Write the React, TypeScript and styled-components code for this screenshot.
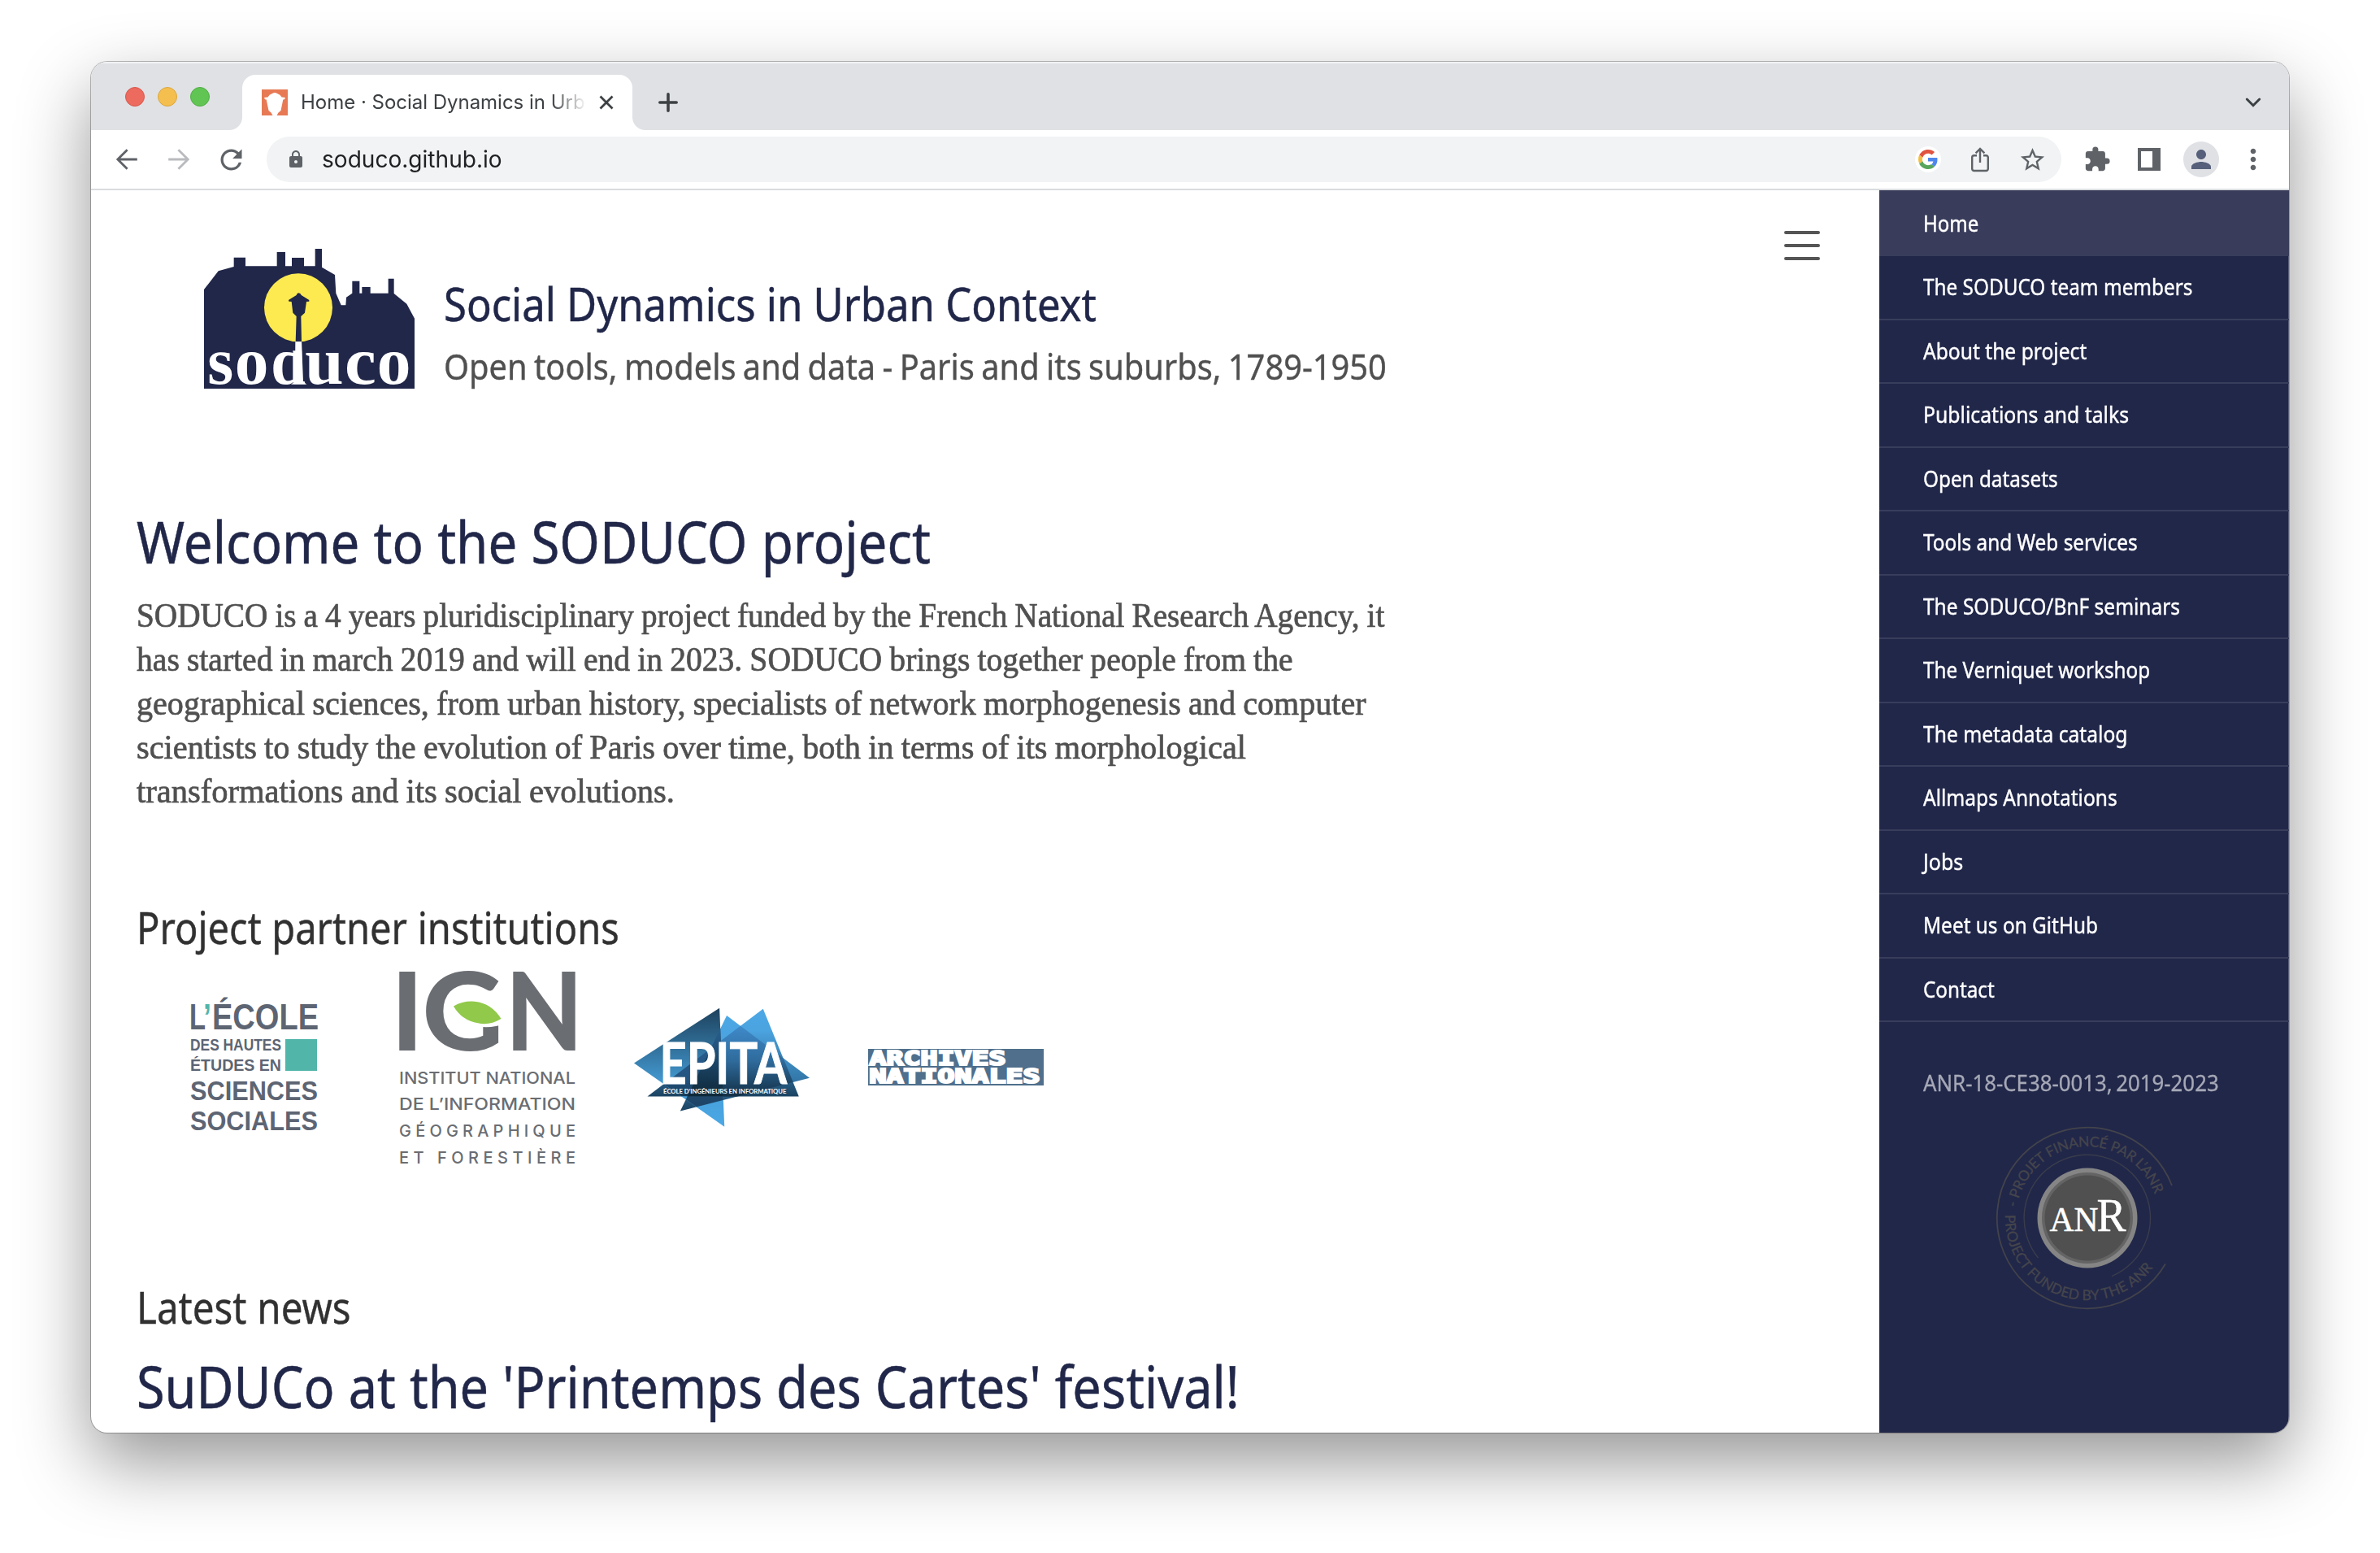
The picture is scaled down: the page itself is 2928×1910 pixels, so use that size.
import React, { useLayoutEffect, useRef, useState } from "react";
import styled, { createGlobalStyle, css } from "styled-components";
import { MdExtension, MdLock, MdMoreVert, MdPerson, MdRefresh, MdStarBorder } from "react-icons/md";

const navy = "#212749";
const sans = `"Noto Sans", "Open Sans", sans-serif`;
const serif = `"Liberation Serif", serif`;
const ui = `Inter, Roboto, sans-serif`;

const GlobalStyle = createGlobalStyle`
  * { box-sizing: border-box; }
  html, body { margin: 0; background: #fff; }
  h1, h2, p, ul { margin: 0; padding: 0; font-weight: 400; }
  svg { overflow: visible; }
`;

/* ---------- condensed text line ---------- */

const FitBox = styled.span<{ $w: number }>`
  display: block;
  width: ${(p) => p.$w}px;
  white-space: nowrap;
`;
const FitInner = styled.span`
  display: inline-block;
  transform-origin: 0 50%;
  vertical-align: top;
`;

function Fit({ w, children }: { w: number; children: React.ReactNode }) {
  const ref = useRef<HTMLSpanElement>(null);
  const [scale, setScale] = useState(1);
  useLayoutEffect(() => {
    const natural = ref.current ? ref.current.offsetWidth : 0;
    if (natural > 0) setScale(w / natural);
  }, [w]);
  return (
    <FitBox $w={w}>
      <FitInner ref={ref} style={{ transform: `scaleX(${scale})` }}>
        {children}
      </FitInner>
    </FitBox>
  );
}

/* ---------- browser window ---------- */

const Desktop = styled.div`
  width: 2928px;
  height: 1910px;
  padding: 76px 112px 148px;
  background: #fff;
  overflow: hidden;
`;
const BrowserWindow = styled.div`
  height: 1686px;
  display: flex;
  flex-direction: column;
  border-radius: 20px;
  overflow: hidden;
  background: #fff;
  box-shadow: 0 0 0 1px rgba(0, 0, 0, 0.26), 0 36px 88px rgba(0, 0, 0, 0.42);
`;
const TabStrip = styled.div`
  height: 84px;
  flex: none;
  display: flex;
  align-items: flex-end;
  background: #dfe1e5;
  box-shadow: inset 0 2px 1px rgba(255, 255, 255, 0.6);
`;
const Lights = styled.div`
  display: flex;
  gap: 16px;
  padding: 0 40px 29px 42px;
`;
const Light = styled.span<{ $c: string; $b: string }>`
  width: 24px;
  height: 24px;
  border-radius: 50%;
  background: ${(p) => p.$c};
  border: 1px solid ${(p) => p.$b};
`;
const Tab = styled.div`
  position: relative;
  width: 480px;
  height: 68px;
  padding: 0 16px 0 24px;
  display: flex;
  align-items: center;
  background: #fff;
  border-radius: 16px 16px 0 0;
  &::before,
  &::after {
    content: "";
    position: absolute;
    bottom: 0;
    width: 16px;
    height: 16px;
  }
  &::before {
    left: -16px;
    background: radial-gradient(circle at 0 0, transparent 15.5px, #fff 16.5px);
  }
  &::after {
    right: -16px;
    background: radial-gradient(circle at 100% 0, transparent 15.5px, #fff 16.5px);
  }
`;
const TabLabel = styled.span`
  width: 350px;
  margin-left: 16px;
  overflow: hidden;
  white-space: nowrap;
  font: 400 24px/34px ${ui};
  letter-spacing: -0.02px;
  color: #3c4043;
  mask-image: linear-gradient(90deg, #000 308px, transparent 352px);
`;
const CloseSlot = styled.span`
  display: flex;
  margin-left: 10px;
`;
const NewTab = styled.span`
  display: flex;
  margin: 0 auto 22px 32px;
`;
const TabSearch = styled.span`
  display: flex;
  margin: 0 32px 22px 0;
`;

const Toolbar = styled.div`
  height: 74px;
  flex: none;
  display: flex;
  align-items: center;
  padding: 0 28px;
  border-bottom: 2px solid #dadcdf;
  color: #5f6368;
`;
const NavButtons = styled.div`
  display: flex;
  gap: 32px;
`;
const Slot = styled.span<{ $color?: string }>`
  width: 32px;
  height: 32px;
  flex: none;
  display: flex;
  align-items: center;
  justify-content: center;
  color: ${(p) => p.$color ?? "#5f6368"};
  svg { flex: none; }
`;
const Omnibox = styled.div`
  flex: 1;
  height: 56px;
  margin: 0 28px;
  padding: 0 20px;
  display: flex;
  align-items: center;
  background: #f1f3f4;
  border-radius: 28px;
`;
const Url = styled.span`
  margin: 0 auto 0 16px;
  font: 400 28px/40px ${ui};
  color: #202124;
`;
const OmniActions = styled.div`
  display: flex;
  gap: 32px;
`;
const Disc = styled.span<{ $s: number; $bg: string }>`
  width: ${(p) => p.$s}px;
  height: ${(p) => p.$s}px;
  border-radius: 50%;
  background: ${(p) => p.$bg};
  display: flex;
  align-items: center;
  justify-content: center;
  color: #56607a;
`;
const Extensions = styled.div`
  display: flex;
  align-items: center;
  gap: 32px;
`;
const Account = styled.div`
  display: flex;
  align-items: center;
  gap: 26px;
  margin-left: 26px;
`;

/* ---------- page ---------- */

const Page = styled.div`
  flex: 1;
  display: flex;
  min-height: 0;
`;
const Main = styled.main`
  flex: 1;
  padding-left: 56px;
  color: #505050;
`;
const Masthead = styled.header`
  display: flex;
  align-items: flex-start;
  height: 389px;
`;
const LogoSlot = styled.div`
  display: flex;
  margin: 72px 36px 0 83px;
`;
const Titles = styled.div`
  flex: 1;
  padding-top: 100px;
  font-family: ${sans};
`;
const SiteTitle = styled.div`
  font-size: 57px;
  line-height: 78px;
  color: ${navy};
  -webkit-text-stroke: 0.5px ${navy};
`;
const Tagline = styled.div`
  margin-top: 9px;
  font-size: 43px;
  line-height: 60px;
  word-spacing: -0.05em;
  -webkit-text-stroke: 0.4px #505050;
`;
const MenuToggle = styled.div`
  width: 44px;
  margin: 50px 73px 0 0;
  display: flex;
  flex-direction: column;
  gap: 12px;
`;
const Bar = styled.span`
  height: 4px;
  border-radius: 2px;
  background: #555;
`;
const headingBase = css`
  font-family: ${sans};
  word-spacing: 0.01em;
`;
const PostTitle = styled.h1`
  ${headingBase}
  font-size: 71px;
  line-height: 86px;
  color: ${navy};
  -webkit-text-stroke: 0.5px ${navy};
`;
const Section = styled.h2<{ $top: number }>`
  ${headingBase}
  margin-top: ${(p) => p.$top}px;
  font-size: 54px;
  line-height: 64px;
  color: #313131;
  -webkit-text-stroke: 0.4px #313131;
`;
const Paragraph = styled.p`
  margin-top: 21px;
  font: 400 41.5px/54px ${serif};
  word-spacing: -0.02em;
  -webkit-text-stroke: 0.7px #505050;
`;
const Partners = styled.div`
  display: flex;
  align-items: center;
  height: 240px;
  margin-top: 20px;
  padding-left: 67px;
`;
const Partner = styled.div<{ $gap?: number }>`
  display: flex;
  margin-left: ${(p) => p.$gap ?? 0}px;
`;
const NewsItem = styled.div`
  margin-top: 23px;
`;

/* ---------- sidebar ---------- */

const Sidebar = styled.aside`
  width: 504px;
  background: ${navy};
  box-shadow: inset -2px 0 0 -1px rgba(255, 255, 255, 0.25);
  font-family: ${sans};
  font-size: 27px;
`;
const Menu = styled.ul`
  list-style: none;
`;
const MenuItem = styled.li<{ $active?: boolean }>`
  height: ${(p) => (p.$active ? 81 : 78.5)}px;
  padding-left: 54px;
  padding-bottom: 8.5px;
  display: flex;
  align-items: flex-end;
  line-height: 60px;
  color: #fff;
  -webkit-text-stroke: 0.4px #fff;
  background: ${(p) => (p.$active ? "#393c5a" : "transparent")};
  border-bottom: 2px solid #383d5c;
`;
const Grant = styled.p`
  margin-top: 47.5px;
  padding-left: 54px;
  line-height: 54px;
  word-spacing: -0.08em;
  color: #a6a8b6;
  -webkit-text-stroke: 0.3px #a6a8b6;
`;
const Badge = styled.div`
  display: flex;
  margin: 26.5px 0 0 143px;
`;

const line = { fill: "none", stroke: "currentColor", strokeLinecap: "butt" as const };

/* ---------- small icons ---------- */

const Favicon = () => (
  <svg width="32" height="32" viewBox="0 0 32 32">
    <rect width="32" height="32" fill="#e77a55" />
    <path
      fill="#fff"
      d="M3 10 L7.5 9.4 Q9 6.2 13 5 Q16 2.8 19 5 Q23 6.2 24.5 9.4 L29 10 L28 12.2 L26.3 12.6 L23.5 26 L20.5 28.5 L18.5 32 H13.5 L11.5 28.5 L8.5 26 L5.7 12.6 L4 12.2 Z"
    />
  </svg>
);
const BackArrow = ({ flip }: { flip?: boolean }) => (
  <svg width="32" height="32" viewBox="0 0 32 32" transform={flip ? "scale(-1 1)" : undefined}>
    <path {...line} strokeWidth="2.8" d="M28.8 16H5M16.6 4.2 4.8 16l11.8 11.8" />
  </svg>
);
const ShareIcon = () => (
  <svg width="32" height="32" viewBox="0 0 32 32">
    <path {...line} strokeWidth="2.4" d="M12 11.2H8.6a2.4 2.4 0 0 0-2.4 2.4v14a2.4 2.4 0 0 0 2.4 2.4h14.8a2.4 2.4 0 0 0 2.4-2.4v-14a2.4 2.4 0 0 0-2.4-2.4H20M16 20V3.4M10.6 8.4 16 3l5.4 5.4" />
  </svg>
);
const PanelIcon = () => (
  <svg width="28" height="28" viewBox="0 0 28 28">
    <path fill="currentColor" fillRule="evenodd" d="M0 0H28V28H0ZM4 4V24H18V4Z" />
  </svg>
);
const GoogleG = () => (
  <svg width="24" height="24" viewBox="0 0 48 48">
    <path fill="#e0533f" d="M24 9.5c3.5 0 6.7 1.2 9.2 3.6l6.9-6.9C35.9 2.4 30.5 0 24 0 14.6 0 6.5 5.4 2.6 13.2l8 6.2C12.4 13.7 17.7 9.5 24 9.5z" />
    <path fill="#4f86ec" d="M47 24.6c0-1.6-.2-3.1-.4-4.6H24v9h12.9c-.6 3-2.2 5.5-4.7 7.2l7.7 6C44.4 38 47 32 47 24.6z" />
    <path fill="#f2bd42" d="M10.5 28.6c-.5-1.5-.8-3-.8-4.6s.3-3.1.8-4.6l-8-6.2C.9 16.5 0 20.1 0 24s.9 7.5 2.6 10.8l7.9-6.2z" />
    <path fill="#58a55c" d="M24 48c6.5 0 11.9-2.1 15.9-5.8l-7.7-6c-2.2 1.4-4.9 2.3-8.2 2.3-6.3 0-11.6-4.2-13.5-9.9l-8 6.2C6.5 42.6 14.6 48 24 48z" />
  </svg>
);

/* ---------- logos ---------- */

const SoducoLogo = () => (
  <svg width="259" height="172" viewBox="63 48 777 516">
    <path
      fill={navy}
      d="M63 198 116 130 173 114V80H216V112H332V60H363V112H387V81H432V112H473V48H498V116L546 144 550 212 569 256H586L588 227 610 212V167H637V212H646V189H677V212H743V158H764V213L811 251 840 305V564H63Z"
    />
    <g fontFamily="Liberation Serif, serif" fontWeight="700" fontSize="250" fill="#fff">
      <text x="76" y="545" textLength="96" lengthAdjust="spacingAndGlyphs">s</text>
      <text x="176" y="545" textLength="125" lengthAdjust="spacingAndGlyphs">o</text>
      <text x="310" y="545" textLength="128" lengthAdjust="spacingAndGlyphs">d</text>
      <text x="436" y="545" textLength="142" lengthAdjust="spacingAndGlyphs">u</text>
      <text x="582" y="545" textLength="116" lengthAdjust="spacingAndGlyphs">c</text>
      <text x="701" y="545" textLength="125" lengthAdjust="spacingAndGlyphs">o</text>
    </g>
    <path fill={navy} d="M330 350H400V424H330ZM424 350H437V424H424Z" />
    <circle cx="411" cy="265" r="126" fill="#fcea50" />
    <path
      fill={navy}
      d="M375 237 404 219Q405 212 413 211Q420 213 422 219L451 237V242L441 243 435 284 421 297 423 391H401L404 297 391 284 386 243 376 242Z"
    />
    <path fill="#fff" d="M402 391H423L429 538 442 548H384L398 538Z" />
  </svg>
);

const EhessLogo = () => (
  <svg width="156" height="170" viewBox="0 0 156 170" fontFamily="Liberation Sans, sans-serif" fontWeight="700" fill="#5d6573">
    <text x="-2" y="38.6" fontSize="43.5" textLength="20" lengthAdjust="spacingAndGlyphs">L</text>
    <text x="15" y="38.6" fontSize="43.5" textLength="10" lengthAdjust="spacingAndGlyphs" fill="#52b5aa">’</text>
    <text x="26" y="38.6" fontSize="43.5" textLength="131" lengthAdjust="spacingAndGlyphs">ÉCOLE</text>
    <text x="-1" y="65" fontSize="19.5" textLength="112" lengthAdjust="spacingAndGlyphs">DES HAUTES</text>
    <text x="-1" y="89.7" fontSize="19.5" textLength="112" lengthAdjust="spacingAndGlyphs">ÉTUDES EN</text>
    <rect x="116" y="51" width="39" height="39" fill="#52b5aa" />
    <text x="-1" y="126" fontSize="34" textLength="157" lengthAdjust="spacingAndGlyphs">SCIENCES</text>
    <text x="-1" y="162.5" fontSize="34" textLength="157" lengthAdjust="spacingAndGlyphs">SOCIALES</text>
  </svg>
);

const ignLines: [string, number][] = [
  ["INSTITUT NATIONAL", 140.7],
  ["DE L’INFORMATION", 173.3],
  ["GÉOGRAPHIQUE", 206.3],
  ["ET FORESTIÈRE", 239],
];
const IgnLogo = () => (
  <svg width="216" height="240" viewBox="0 0 216 240" fill="#6a6d72">
    <g fontFamily="Lato, sans-serif" fontWeight="900" fontSize="134">
      <text x="-10.5" y="100" textLength="39" lengthAdjust="spacingAndGlyphs">I</text>
      <text x="27.5" y="100" textLength="100" lengthAdjust="spacingAndGlyphs">G</text>
      <text x="130" y="100" textLength="95" lengthAdjust="spacingAndGlyphs">N</text>
    </g>
    <path fill="#fff" d="M60 36H130V67Q116 72 101 71V81H80L60 70Z" />
    <path fill="#91c94a" d="M66 45.5Q78 38.500 92 39.700Q113 42 124.500 61Q110 69.500 96 66.300Q76 63 66 45.5Z" />
    <g fontFamily="Inter, sans-serif" fontWeight="500" fontSize="20">
      {ignLines.map(([t, y]) => (
        <text key={t} x="-1" y={y} textLength="217" lengthAdjust={t.startsWith("I") || t.startsWith("D") ? "spacingAndGlyphs" : "spacing"}>
          {t}
        </text>
      ))}
    </g>
  </svg>
);

const triA = "350,87 56,290 367,524";
const triB = "375,115 215,467 660,345";
const triC = "500,90 102,413 623,413";
const EpitaLogo = () => (
  <svg width="216" height="147" viewBox="56 85 604 440" preserveAspectRatio="none">
    <defs>
      <linearGradient id="epA" x1="0" y1="0" x2="0" y2="1">
        <stop offset="0" stopColor="#1d415c" />
        <stop offset="0.65" stopColor="#459dd6" />
        <stop offset="1" stopColor="#4ba8e6" />
      </linearGradient>
      <linearGradient id="epB" x1="0" y1="0" x2="0" y2="1">
        <stop offset="0" stopColor="#4ba8e6" />
        <stop offset="0.25" stopColor="#4ba3df" />
        <stop offset="0.7" stopColor="#3174a4" />
        <stop offset="1" stopColor="#1b4260" />
      </linearGradient>
      <linearGradient id="epAB" x1="0" y1="0" x2="0" y2="1">
        <stop offset="0" stopColor="#2f6e9d" />
        <stop offset="0.3" stopColor="#245580" />
        <stop offset="1" stopColor="#1c3f5e" />
      </linearGradient>
      <linearGradient id="epBC" gradientUnits="userSpaceOnUse" x1="0" y1="150" x2="0" y2="413">
        <stop offset="0" stopColor="#3f8bcb" />
        <stop offset="0.5" stopColor="#2f6b9c" />
        <stop offset="1" stopColor="#122f45" />
      </linearGradient>
      <linearGradient id="epAC" gradientUnits="userSpaceOnUse" x1="0" y1="200" x2="0" y2="413">
        <stop offset="0" stopColor="#2a6090" />
        <stop offset="0.7" stopColor="#245480" />
        <stop offset="1" stopColor="#163a57" />
      </linearGradient>
      <linearGradient id="epABC" gradientUnits="userSpaceOnUse" x1="0" y1="200" x2="0" y2="413">
        <stop offset="0" stopColor="#255a87" />
        <stop offset="1" stopColor="#0e2738" />
      </linearGradient>
      <clipPath id="inB"><polygon points={triB} /></clipPath>
      <clipPath id="inC"><polygon points={triC} /></clipPath>
    </defs>
    <polygon points={triB} fill="url(#epB)" />
    <polygon points={triC} fill="url(#epB)" />
    <polygon points={triA} fill="url(#epA)" />
    <polygon points={triC} fill="url(#epBC)" clipPath="url(#inB)" />
    <polygon points={triA} fill="url(#epAB)" clipPath="url(#inB)" />
    <g clipPath="url(#inC)">
      <polygon points={triA} fill="url(#epAC)" />
      <polygon points={triA} fill="url(#epABC)" clipPath="url(#inB)" />
    </g>
    <g fontFamily="Lato, sans-serif" fontWeight="700" fill="#fff">
      <text x="144" y="367" fontSize="209" textLength="438" lengthAdjust="spacingAndGlyphs" stroke="#fff" strokeWidth="3">EPITA</text>
      <text x="157" y="401" fontSize="23" textLength="423" lengthAdjust="spacingAndGlyphs">ÉCOLE D’INGÉNIEURS EN INFORMATIQUE</text>
    </g>
  </svg>
);

const ArchivesLogo = () => (
  <svg width="216" height="45" viewBox="0 0 216 45">
    <rect width="216" height="45" fill="#4f6f8c" />
    <g fontFamily="DejaVu Sans Mono, monospace" fontWeight="700" fontSize="24" fill="#fff" stroke="#fff" strokeWidth="2.2">
      <text x="1.5" y="20.3" textLength="168" lengthAdjust="spacingAndGlyphs">ARCHIVES</text>
      <text x="1.5" y="42.3" textLength="210" lengthAdjust="spacingAndGlyphs">NATIONALES</text>
    </g>
  </svg>
);

const AnrBadge = () => (
  <svg width="226" height="226" viewBox="-113 -113 226 226">
    <defs>
      <path id="anrTop" d="M-84.5 -23.6A87.7 87.7 0 0 1 84.5 -23.6" />
      <path id="anrBottom" d="M-101 -4A101 101 0 0 0 86.6 52" />
    </defs>
    <g fill="none" stroke="#43434b" strokeWidth="1.8">
      <path d="M104 -40A111.3 111.3 0 1 0 96 56.5" />
      <path d="M-60.5 49A77.7 77.7 0 1 1 30 71.6" strokeWidth="1.4" stroke="#3a3d4c" />
    </g>
    <g fill="#45454c" stroke="#45454c" strokeWidth="0.3" fontFamily="Lato, sans-serif" fontSize="17.5">
      <text><textPath href="#anrTop" textLength="222">PROJET FINANCÉ PAR L’ANR</textPath></text>
      <text><textPath href="#anrBottom" textLength="256">PROJECT FUNDED BY THE ANR</textPath></text>
      <text transform="translate(-87 -13) rotate(-80)">-</text>
    </g>
    <circle r="61.5" fill="#858585" />
    <circle r="56" fill="#646464" />
    <circle r="52.5" fill="#505050" />
    <g fill="#fff" stroke="#fff" strokeWidth="0.5" fontFamily="Liberation Serif, serif">
      <text x="-46.5" y="15.5" fontSize="42.5" textLength="60" lengthAdjust="spacingAndGlyphs">AN</text>
      <text x="11.5" y="15.5" fontSize="57" textLength="36" lengthAdjust="spacingAndGlyphs">R</text>
    </g>
  </svg>
);

/* ---------- content ---------- */

const menu: { label: string; w: number }[] = [
  { label: "Home", w: 68.5 },
  { label: "The SODUCO team members", w: 331.5 },
  { label: "About the project", w: 201.5 },
  { label: "Publications and talks", w: 253 },
  { label: "Open datasets", w: 165.5 },
  { label: "Tools and Web services", w: 264 },
  { label: "The SODUCO/BnF seminars", w: 316.5 },
  { label: "The Verniquet workshop", w: 279.5 },
  { label: "The metadata catalog", w: 251.5 },
  { label: "Allmaps Annotations", w: 239 },
  { label: "Jobs", w: 49 },
  { label: "Meet us on GitHub", w: 215 },
  { label: "Contact", w: 88 },
];

const intro: { text: string; w: number }[] = [
  { text: "SODUCO is a 4 years pluridisciplinary project funded by the French National Research Agency, it", w: 1535 },
  { text: "has started in march 2019 and will end in 2023. SODUCO brings together people from the", w: 1423 },
  { text: "geographical sciences, from urban history, specialists of network morphogenesis and computer", w: 1513 },
  { text: "scientists to study the evolution of Paris over time, both in terms of its morphological", w: 1365 },
  { text: "transformations and its social evolutions.", w: 662 },
];

export default function App() {
  return (
    <Desktop>
      <GlobalStyle />
      <BrowserWindow>
        <TabStrip>
          <Lights>
            <Light $c="#ec6a5e" $b="#d9574b" />
            <Light $c="#f5bf4f" $b="#dba73c" />
            <Light $c="#61c554" $b="#50ae43" />
          </Lights>
          <Tab>
            <Favicon />
            <TabLabel>Home · Social Dynamics in Urban</TabLabel>
            <CloseSlot>
              <svg width="32" height="32" viewBox="0 0 32 32" color="#3c4043">
                <path {...line} strokeWidth="2.8" d="M8.5 8.5l15 15M23.5 8.5l-15 15" />
              </svg>
            </CloseSlot>
          </Tab>
          <NewTab>
            <svg width="24" height="24" viewBox="0 0 24 24" color="#3c4043">
              <path {...line} strokeLinecap="round" strokeWidth="3.6" d="M12 1.8v20.4M1.8 12h20.4" />
            </svg>
          </NewTab>
          <TabSearch>
            <svg width="24" height="24" viewBox="0 0 24 24" color="#3c4043">
              <path {...line} strokeLinecap="round" strokeWidth="3" d="M4.3 8l7.7 7.7L19.7 8" />
            </svg>
          </TabSearch>
        </TabStrip>
        <Toolbar>
          <NavButtons>
            <Slot><BackArrow /></Slot>
            <Slot $color="#b9bbbe"><BackArrow flip /></Slot>
            <Slot><MdRefresh size={39} /></Slot>
          </NavButtons>
          <Omnibox>
            <Slot><MdLock size={24} /></Slot>
            <Url><Fit w={221.5}>soduco.github.io</Fit></Url>
            <OmniActions>
              <Slot><Disc $s={32} $bg="#fff"><GoogleG /></Disc></Slot>
              <Slot><ShareIcon /></Slot>
              <Slot><MdStarBorder size={35} /></Slot>
            </OmniActions>
          </Omnibox>
          <Extensions>
            <Slot><MdExtension size={34} /></Slot>
            <Slot><PanelIcon /></Slot>
          </Extensions>
          <Account>
            <Disc $s={44} $bg="#dfe1e5"><MdPerson size={36} /></Disc>
            <Slot><MdMoreVert size={40} /></Slot>
          </Account>
        </Toolbar>
        <Page>
          <Main>
            <Masthead>
              <LogoSlot><SoducoLogo /></LogoSlot>
              <Titles>
                <SiteTitle><Fit w={803}>Social Dynamics in Urban Context</Fit></SiteTitle>
                <Tagline><Fit w={1160}>Open tools, models and data - Paris and its suburbs, 1789-1950</Fit></Tagline>
              </Titles>
              <MenuToggle><Bar /><Bar /><Bar /></MenuToggle>
            </Masthead>
            <PostTitle><Fit w={977}>Welcome to the SODUCO project</Fit></PostTitle>
            <Paragraph>
              {intro.map((l) => (
                <Fit key={l.text} w={l.w}>{l.text}</Fit>
              ))}
            </Paragraph>
            <Section $top={108}><Fit w={594}>Project partner institutions</Fit></Section>
            <Partners>
              <Partner><EhessLogo /></Partner>
              <Partner $gap={100.6}><IgnLogo /></Partner>
              <Partner $gap={72.5}><EpitaLogo /></Partner>
              <Partner $gap={72}><ArchivesLogo /></Partner>
            </Partners>
            <Section $top={143}><Fit w={264}>Latest news</Fit></Section>
            <NewsItem>
              <PostTitle><Fit w={1357}>SuDUCo at the 'Printemps des Cartes' festival!</Fit></PostTitle>
            </NewsItem>
          </Main>
          <Sidebar>
            <Menu>
              {menu.map((m, i) => (
                <MenuItem key={m.label} $active={i === 0}>
                  <Fit w={m.w}>{m.label}</Fit>
                </MenuItem>
              ))}
            </Menu>
            <Grant><Fit w={364}>ANR-18-CE38-0013, 2019-2023</Fit></Grant>
            <Badge><AnrBadge /></Badge>
          </Sidebar>
        </Page>
      </BrowserWindow>
    </Desktop>
  );
}
